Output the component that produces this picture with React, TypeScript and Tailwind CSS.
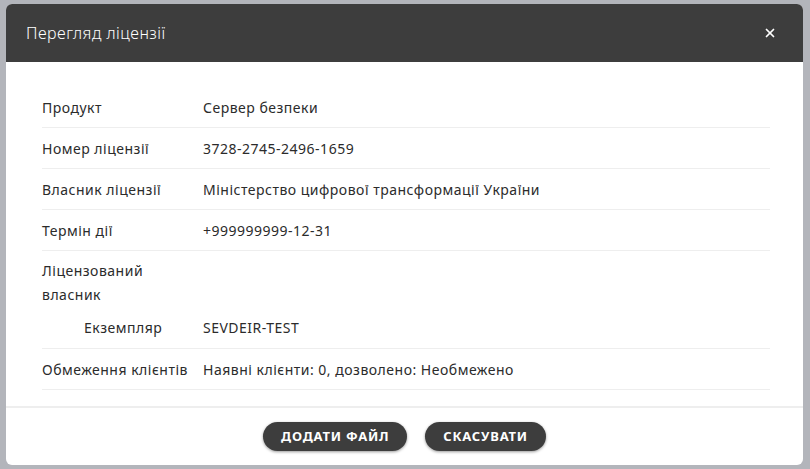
import { X } from "lucide-react";

const ROWS: [string, string][] = [
  ["Продукт", "Сервер безпеки"],
  ["Номер ліцензії", "3728-2745-2496-1659"],
  ["Власник ліцензії", "Міністерство цифрової трансформації України"],
  ["Термін дії", "+999999999-12-31"],
];

export default function App() {
  return (
    <div
      className="h-[469px] w-[810px] bg-[#b3b5bb] px-[6px] pt-[4px] overflow-hidden"
      style={{ fontFamily: '"Noto Sans", "Open Sans", sans-serif' }}
    >
      <div className="w-[797px] h-[461px] bg-white rounded-[6px] overflow-hidden flex flex-col">
        <div className="h-[58px] bg-[#3d3d3d] flex items-center justify-between pl-[20px] pr-[26px]">
          <div className="text-[16px] text-white font-light tracking-[0.5px]">Перегляд ліцензії</div>
          <X className="w-[14px] h-[14px] text-white" strokeWidth={3} />
        </div>

        <div className="pl-[36px] pr-[33px] pt-[25px] pb-[16px] text-[14px] text-[#2b2b2b] tracking-[0.5px]">
          {ROWS.map(([k, v]) => (
            <div key={k} className="flex items-center h-[41px] border-b border-[#eeeeee]">
              <div className="w-[161px] shrink-0">{k}</div>
              <div>{v}</div>
            </div>
          ))}
          <div className="pt-[8px] leading-[24px] w-[161px]">Ліцензований власник</div>
          <div className="flex items-center h-[42px] border-b border-[#eeeeee]">
            <div className="w-[161px] shrink-0 pl-[42px]">Екземпляр</div>
            <div>SEVDEIR-TEST</div>
          </div>
          <div className="flex items-center h-[41px] border-b border-[#eeeeee]">
            <div className="w-[161px] shrink-0">Обмеження клієнтів</div>
            <div>Наявні клієнти: 0, дозволено: Необмежено</div>
          </div>
        </div>

        <div className="border-t-2 border-[#eeeeee] flex justify-center gap-[18px] pt-[14px]">
          <button className="h-[29px] px-[18px] rounded-full bg-[#3d3d3d] text-white text-[13px] font-bold tracking-[0.8px] shadow-[0_1px_3px_rgba(0,0,0,0.4)]">
            ДОДАТИ ФАЙЛ
          </button>
          <button className="h-[29px] px-[18px] rounded-full bg-[#3d3d3d] text-white text-[13px] font-bold tracking-[0.8px] shadow-[0_1px_3px_rgba(0,0,0,0.4)]">
            СКАСУВАТИ
          </button>
        </div>
      </div>
    </div>
  );
}
